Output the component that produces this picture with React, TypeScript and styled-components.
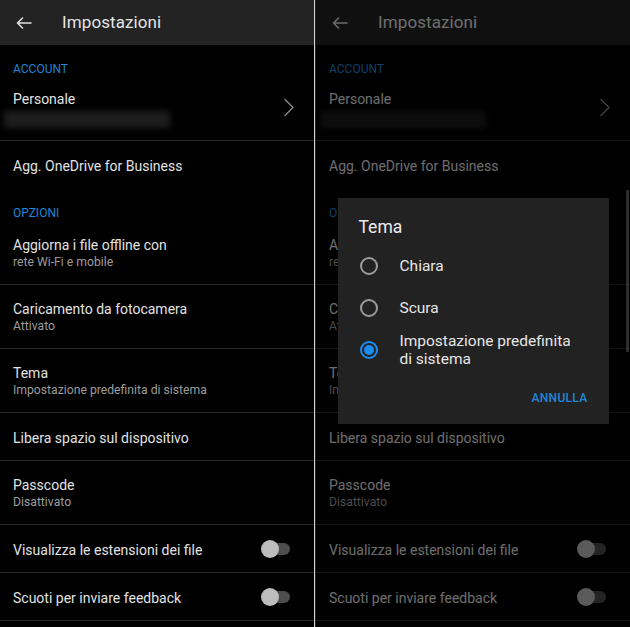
import React from 'react';
import styled, { createGlobalStyle } from 'styled-components';

const GlobalStyle = createGlobalStyle`
  html, body {
    margin: 0;
    padding: 0;
    background: #000;
  }
  body {
    font-family: Roboto, "Noto Sans", "DejaVu Sans", sans-serif;
    -webkit-font-smoothing: antialiased;
  }
`;

const BLUE = '#1f86d9';

type Item =
  | { kind: 'section'; label: string }
  | { kind: 'account'; title: string }
  | { kind: 'row'; title: string; subtitle?: string; toggle?: boolean; noDivider?: boolean };

const ITEMS: Item[] = [
  { kind: 'section', label: 'ACCOUNT' },
  { kind: 'account', title: 'Personale' },
  { kind: 'row', title: 'Agg. OneDrive for Business', noDivider: true },
  { kind: 'section', label: 'OPZIONI' },
  { kind: 'row', title: 'Aggiorna i file offline con', subtitle: 'rete Wi-Fi e mobile' },
  { kind: 'row', title: 'Caricamento da fotocamera', subtitle: 'Attivato' },
  { kind: 'row', title: 'Tema', subtitle: 'Impostazione predefinita di sistema' },
  { kind: 'row', title: 'Libera spazio sul dispositivo' },
  { kind: 'row', title: 'Passcode', subtitle: 'Disattivato' },
  { kind: 'row', title: 'Visualizza le estensioni dei file', toggle: true },
  { kind: 'row', title: 'Scuoti per inviare feedback', toggle: true },
];

const THEMES = ['Chiara', 'Scura', 'Impostazione predefinita di sistema'];

const Page = styled.div`
  display: flex;
  width: 630px;
  height: 627px;
  overflow: hidden;
  background: #000;
`;

const Screen = styled.div`
  position: relative;
  width: 314px;
  height: 627px;
  flex-shrink: 0;
  overflow: hidden;
  background: #000;
  display: flex;
  flex-direction: column;
`;

const ScreenSeparator = styled.div`
  width: 1px;
  flex-shrink: 0;
  background: #d6d6d6;
  border-right: 1px solid #1e1e1e;
`;

const Header = styled.header`
  height: 45px;
  flex-shrink: 0;
  display: flex;
  align-items: center;
  background: #232323;
`;

const BackButton = styled.div`
  width: 62px;
  height: 45px;
  display: flex;
  align-items: center;
  padding-left: 16px;
  box-sizing: border-box;
`;

const HeaderTitle = styled.h1`
  margin: 0 0 1px;
  font-size: 17px;
  font-weight: 400;
  color: #e4e4e4;
  letter-spacing: 0.1px;
`;

const SectionLabel = styled.div`
  padding: 16px 13px 0;
  font-size: 12px;
  line-height: 16px;
  color: ${BLUE};
  flex-shrink: 0;
`;

const Row = styled.div<{ $tall: boolean; $divider: boolean }>`
  box-sizing: border-box;
  display: flex;
  align-items: center;
  height: ${p => (p.$tall ? 64 : 48)}px;
  padding: ${p => (p.$tall ? '15px 24px 14px 13px' : '3px 24px 0 13px')};
  border-bottom: 1px solid ${p => (p.$divider ? '#2a2a2a' : 'transparent')};
  flex-shrink: 0;
`;

const RowText = styled.div`
  flex: 1;
  min-width: 0;
  display: flex;
  flex-direction: column;
`;

const RowTitle = styled.div`
  font-size: 14px;
  line-height: 18px;
  color: #e2e2e2;
  white-space: nowrap;
`;

const RowSubtitle = styled.div`
  font-size: 12.2px;
  line-height: 16px;
  color: #9c9c9c;
  white-space: nowrap;
`;

const BlurredAccount = styled.div`
  margin: 3px 0 0 -9px;
  width: 166px;
  height: 17px;
  background: #1d1d1d;
  filter: blur(3px);
`;

const ChevronWrap = styled.div`
  display: flex;
  align-items: center;
  margin: -4px -5px 0 0;
`;

const Toggle = styled.div`
  position: relative;
  width: 29px;
  height: 18px;
  margin-top: -2px;
  display: flex;
  align-items: center;
  justify-content: flex-end;
`;

const ToggleTrack = styled.div`
  width: 24px;
  height: 12px;
  border-radius: 6px;
  background: #4d4d4d;
`;

const ToggleKnob = styled.div`
  position: absolute;
  left: 0;
  top: 0;
  width: 18px;
  height: 18px;
  border-radius: 50%;
  background: #bdbdbd;
`;

const Overlay = styled.div`
  position: absolute;
  inset: 0;
  background: rgba(0, 0, 0, 0.52);
  display: flex;
  align-items: center;
  justify-content: center;
`;

const Scrollbar = styled.div`
  position: absolute;
  right: 1px;
  top: 190px;
  width: 3px;
  height: 162px;
  background: #2e2e2e;
`;

const Dialog = styled.div`
  width: 271px;
  box-sizing: border-box;
  background: #222;
  padding: 18px 21px 17px 21px;
  margin-bottom: 5px;
  display: flex;
  flex-direction: column;
`;

const DialogTitle = styled.div`
  font-size: 17.5px;
  line-height: 22px;
  color: #ececec;
  margin-bottom: 7px;
`;

const OptionList = styled.div`
  display: flex;
  flex-direction: column;
`;

const Option = styled.div`
  display: flex;
  align-items: center;
  min-height: 42px;
  gap: 22px;
  padding-left: 1px;
`;

const Radio = styled.div<{ $checked: boolean }>`
  width: 18px;
  height: 18px;
  box-sizing: border-box;
  border-radius: 50%;
  border: 2px solid ${p => (p.$checked ? '#1b8cf0' : '#9c9c9c')};
  display: flex;
  align-items: center;
  justify-content: center;
  flex-shrink: 0;

  &::after {
    content: '';
    display: ${p => (p.$checked ? 'block' : 'none')};
    width: 10px;
    height: 10px;
    border-radius: 50%;
    background: #1b8cf0;
  }
`;

const OptionLabel = styled.div`
  font-size: 15.5px;
  line-height: 18px;
  color: #e6e6e6;
`;

const DialogActions = styled.div`
  display: flex;
  justify-content: flex-end;
  margin-top: 19px;
`;

const TextButton = styled.button`
  background: none;
  border: none;
  padding: 0;
  font-family: inherit;
  font-size: 12px;
  line-height: 17px;
  letter-spacing: 0.3px;
  font-weight: 500;
  color: ${BLUE};
`;

const BackArrow = () => (
  <svg width="16" height="12" viewBox="0 0 16 12" fill="none">
    <path d="M15 6H1.5M6.5 1L1.5 6l5 5" stroke="#e0e0e0" strokeWidth="1.6" strokeLinecap="round" strokeLinejoin="round" />
  </svg>
);

const Chevron = () => (
  <svg width="12" height="19" viewBox="0 0 12 19" fill="none">
    <path d="M2 1.5l8 8-8 8" stroke="#8a8a8a" strokeWidth="1.3" strokeLinecap="round" strokeLinejoin="round" />
  </svg>
);

const SettingsList: React.FC = () => (
  <>
    {ITEMS.map((item, i) => {
      if (item.kind === 'section') {
        return <SectionLabel key={i}>{item.label}</SectionLabel>;
      }
      if (item.kind === 'account') {
        return (
          <Row key={i} $tall $divider>
            <RowText>
              <RowTitle>{item.title}</RowTitle>
              <BlurredAccount />
            </RowText>
            <ChevronWrap>
              <Chevron />
            </ChevronWrap>
          </Row>
        );
      }
      return (
        <Row key={i} $tall={!!item.subtitle} $divider={!item.noDivider}>
          <RowText>
            <RowTitle>{item.title}</RowTitle>
            {item.subtitle && <RowSubtitle>{item.subtitle}</RowSubtitle>}
          </RowText>
          {item.toggle && (
            <Toggle>
              <ToggleTrack />
              <ToggleKnob />
            </Toggle>
          )}
        </Row>
      );
    })}
  </>
);

const ThemeDialog: React.FC<{ selected: number }> = ({ selected }) => (
  <Dialog>
    <DialogTitle>Tema</DialogTitle>
    <OptionList>
      {THEMES.map((t, i) => (
        <Option key={t}>
          <Radio $checked={i === selected} />
          <OptionLabel>
            {i === 2 ? (
              <>
                Impostazione predefinita
                <br />
                di sistema
              </>
            ) : (
              t
            )}
          </OptionLabel>
        </Option>
      ))}
    </OptionList>
    <DialogActions>
      <TextButton type="button">ANNULLA</TextButton>
    </DialogActions>
  </Dialog>
);

const SettingsScreen: React.FC<{ showDialog?: boolean }> = ({ showDialog = false }) => (
  <Screen>
    <Header>
      <BackButton>
        <BackArrow />
      </BackButton>
      <HeaderTitle>Impostazioni</HeaderTitle>
    </Header>
    <SettingsList />
    {showDialog && (
      <Overlay>
        <Scrollbar />
        <ThemeDialog selected={2} />
      </Overlay>
    )}
  </Screen>
);

export default function App() {
  return (
    <>
      <GlobalStyle />
      <Page>
        <SettingsScreen />
        <ScreenSeparator />
        <SettingsScreen showDialog />
      </Page>
    </>
  );
}
